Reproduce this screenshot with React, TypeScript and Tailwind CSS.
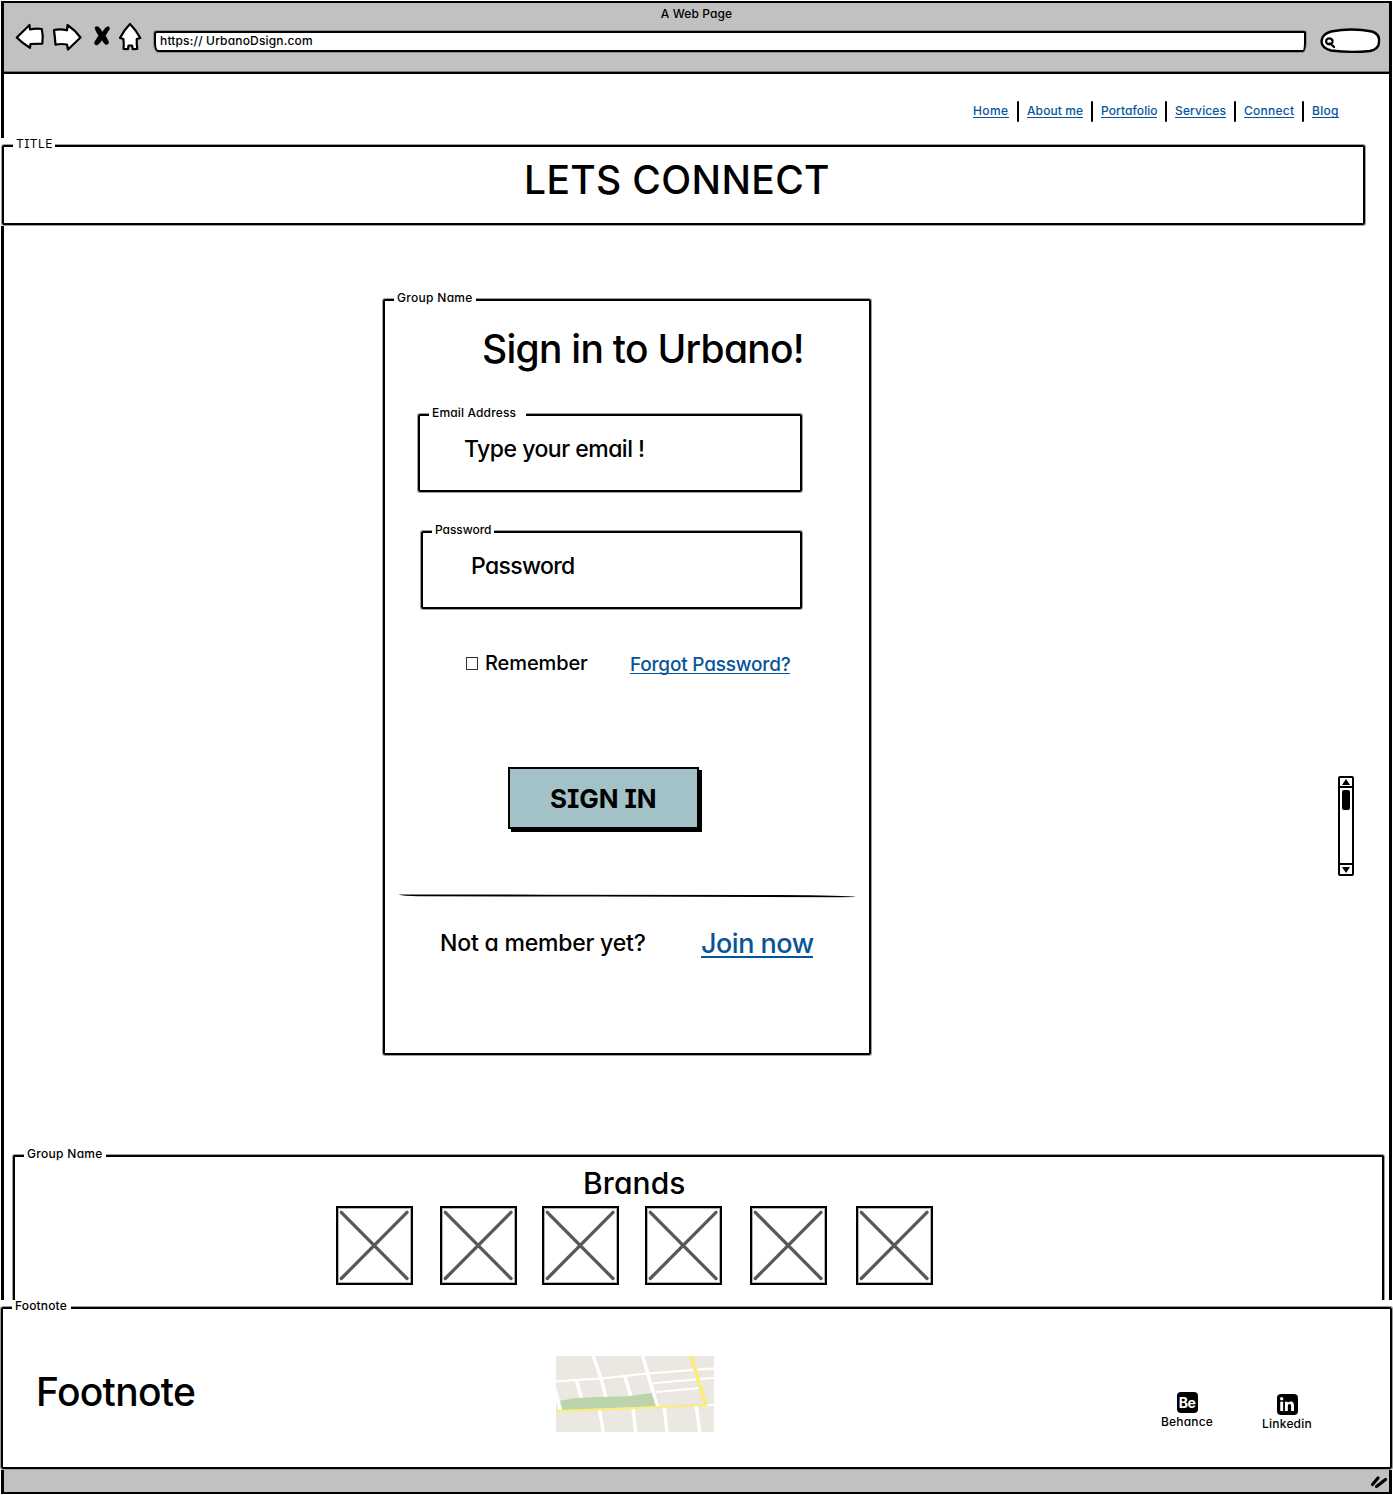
import type { ReactNode } from "react";
import { FaLinkedinIn } from "react-icons/fa6";

const INK = "border-black shadow-[0_0_0_1px_rgba(0,0,0,0.38)]";

function Group({ label, box, legend, children }: { label: string; box: string; legend: string; children: ReactNode }) {
  return (
    <fieldset className={`border-2 ${box}`}>
      <legend className={`ml-[9px] h-4 whitespace-nowrap bg-white pb-1 pl-[3px] text-[12px] font-medium leading-[12px] ${legend}`}>
        {label}
      </legend>
      {children}
    </fieldset>
  );
}

function Toolbar() {
  const outline = { fill: "#fff", stroke: "#000", strokeWidth: 2.2, strokeLinejoin: "round" as const };
  return (
    <div className="flex h-[47px] items-start pl-[10px]">
      <svg className="-mt-[3px] h-[30px] w-[32px]" viewBox="14 22 32 30">
        <path {...outline} d="M16.8 37.5 L29.5 25 L30 29.5 Q36 28 41.8 29 Q43.5 36 42.3 43.6 L30.5 44 L30 47.8 Q22 43 16.8 37.5Z" />
      </svg>
      <svg className="ml-[5px] -mt-[3px] h-[30px] w-[34px]" viewBox="51 22 34 30">
        <path {...outline} d="M54 30 Q60 28.5 67 30.3 L67.5 25 Q75 30 80.5 37.5 L68 49.5 L67 44.5 Q61 43.500 55.5 44.6 Q55 38 54 30Z" />
      </svg>
      <svg className="ml-[7px] -mt-[1px] h-[24px] w-[20px]" viewBox="92 24 20 24">
        <path
          d="M95.300 27 Q98 26 99.500 28 L102.500 32.500 Q105 27.500 107.500 26.800 Q109.800 26.500 109.300 29 L105.300 35.500 L108.500 42 Q108.500 44.500 106 44.500 Q104.300 44 102 39.500 Q99.500 44 97 45 Q94.500 45 94.500 42.500 L98.800 35.500 Q94.500 29 95.300 27Z"
          fill="#000"
          stroke="#000"
          strokeWidth="0.800"
        />
      </svg>
      <svg className="ml-[5px] -mt-[3px] h-[30px] w-[26px]" viewBox="117 22 26 30">
        <path {...outline} d="M130 24 Q136 30 140.3 38 L136.8 39 Q136.5 44 137.3 49 L132.8 49.2 L132 45.5 L128.5 45.5 L128 49.2 L123.6 49 Q124 43 123.4 39 L120 38 Q124 30 130 24Z" />
      </svg>
      <div className="ml-[11px] mt-[6px] h-[21px] w-[1152px] rounded-[3px_2px_3px_4px/3px_2px_10px_9px] border-2 border-black bg-white pl-[4px] text-[12px] font-medium leading-[16px] tracking-[0.16px] shadow-[0_0_0_1px_rgba(0,0,0,0.25)]">
        https:// UrbanoDsign.com
      </div>
      <svg className="ml-[12px] mt-[1px] h-[30px] w-[66px]" viewBox="1318 26 66 30">
        <path d="M1331 31.5 Q1352 27.5 1372 31.5 Q1380 34 1379 42 Q1379 49 1370 51 Q1350 53 1331 50.5 Q1321.5 48 1321.5 41 Q1322 34 1331 31.5Z" fill="#fff" stroke="#000" strokeWidth="2.4" />
        <path d="M1329.300 38.300 a3.300 3 0 1 0 .1 0Z M1329.500 43.500 L1331.300 44.300 M1331.500 44.500 L1334 47" fill="none" stroke="#000" strokeWidth="2.3" strokeLinecap="round" />
      </svg>
    </div>
  );
}

const LINKS = [
  ["Home", "w-[36px] tracking-[0.4px]"],
  ["About me", "w-[56px] tracking-[0.1px]"],
  ["Portafolio", "w-[56px] tracking-[0.08px]"],
  ["Services", "w-[51px] tracking-[0.15px]"],
  ["Connect", "w-[50px] tracking-[0.25px]"],
  ["Blog", "w-[27px] tracking-[0.3px]"],
];

function Nav() {
  return (
    <nav className="flex h-16 items-start justify-end gap-2 pr-[50px] pt-[27px]">
      {LINKS.map(([name, size], i) => (
        <div key={name} className="flex gap-2">
          {i > 0 && <span className="h-[21px] w-[2px] rounded-sm bg-black" />}
          <a className={`mt-[3px] h-[14px] whitespace-nowrap border-b border-[#08549a] text-[12px] font-medium leading-[14px] text-[#08549a] ${size}`}>{name}</a>
        </div>
      ))}
    </nav>
  );
}

function SignIn() {
  return (
    <Group label="Group Name" box={`ml-[379px] mt-[66px] h-[763px] w-[488px] rounded-[2px] ${INK}`} legend="w-[82px] tracking-[0.3px]">
      <h2 className="mt-[21px] h-[39px] pl-[97px] text-[39px] font-[450] leading-[40px] tracking-[-0.74px]">Sign in to Urbano!</h2>
      <Group label="Email Address" box={`ml-[33px] mt-[39px] h-[85px] w-[384px] rounded-[2px] ${INK}`} legend="w-[97px] tracking-[0.15px]">
        <p className="mt-3 pl-[44px] text-[23px] font-[450] leading-7 tracking-[-0.5px]">Type your email !</p>
      </Group>
      <Group label="Password" box={`ml-[36px] mt-8 h-[85px] w-[381px] rounded-[2px] ${INK}`} legend="w-[62px] tracking-[-0.05px]">
        <p className="mt-3 pl-[48px] text-[23px] font-[450] leading-7 tracking-[-0.65px]">Password</p>
      </Group>
      <div className="mt-[41px] flex h-7 items-start pl-[81px]">
        <span className="mt-[7px] h-[13px] w-3 border border-black/80" />
        <span className="ml-[7px] w-[145px] text-[20px] font-[450] leading-[26px] tracking-[-0.1px]">Remember</span>
        <a className="mt-px h-[23px] w-[160px] whitespace-nowrap border-b border-[#08549a] text-[19px] font-[450] leading-[27px] tracking-[-0.2px] text-[#08549a]">Forgot Password?</a>
      </div>
      <button className="ml-[123px] mt-[89px] block h-[62px] w-[191px] border-2 border-black bg-[#a3c2c7] pl-[40px] text-left text-[26px] font-bold leading-[59px] tracking-[-0.1px] shadow-[3px_3px_0_#000]">
        SIGN IN
      </button>
      <svg className="ml-[13px] mt-[65px] h-1 w-[459px]" viewBox="0 0 459 4">
        <path d="M0.500 0.600 Q8 0.200 150 0.700 L380 1 Q450 1.400 458 3 L440 3.200 L200 2.600 L20 2.300 Q5 2 0.500 0.600Z" />
      </svg>
      <div className="mt-[31px] flex items-start pl-[55px]">
        <span className="w-[261px] text-[23px] font-[450] leading-7 tracking-[-0.2px]">Not a member yet?</span>
        <a className="h-[29px] w-[112px] whitespace-nowrap border-b-2 border-[#08549a] text-[27px] font-[450] leading-[29px] tracking-[-0.5px] text-[#08549a]">Join now</a>
      </div>
    </Group>
  );
}

function ScrollBar() {
  return (
    <div className="ml-auto mr-[35px] mt-[550px] flex h-[100px] w-4 flex-col items-center rounded-[2px] border-2 border-black">
      <div className="flex h-[10px] w-full items-center justify-center border-b-2 border-black">
        <svg className="h-[6px] w-2" viewBox="0 0 8 6"><path d="M4 0 L8 6 H0Z" /></svg>
      </div>
      <div className="mt-[2px] h-5 w-2 rounded-[2px] bg-black" />
      <div className="mt-auto flex h-[11px] w-full items-center justify-center border-t-2 border-black">
        <svg className="h-[6px] w-2" viewBox="0 0 8 6"><path d="M4 6 L8 0 H0Z" /></svg>
      </div>
    </div>
  );
}

const BRAND_GAPS = ["ml-[321px]", "ml-[27px]", "ml-[25px]", "ml-[26px]", "ml-[28px]", "ml-[29px]"];

function Brands() {
  return (
    <Group label="Group Name" box={`ml-[9px] h-[152px] w-[1371px] rounded-t-[2px] border-b-0 ${INK}`} legend="w-[82px] tracking-[0.3px]">
      <h2 className="mt-px pl-[568px] text-[30px] font-[450] leading-9 tracking-[0.1px]">Brands</h2>
      <div className="mt-[5px] flex">
        {BRAND_GAPS.map((gap) => (
          <div key={gap} className={`h-[79px] w-[77px] border-2 border-black shadow-[inset_0_0_0_1px_rgba(0,0,0,0.3)] ${gap}`}>
            <svg className="h-full w-full" viewBox="0 0 73 75" stroke="#595959" strokeWidth="3.3" strokeLinecap="round">
              <path d="M3.3 4.3 L69 70.500 M69 4.3 L3.3 70.500" />
            </svg>
          </div>
        ))}
      </div>
    </Group>
  );
}

function StreetMap() {
  return (
    <svg className="mt-10 h-[76px] w-[158px]" viewBox="0 0 474 228" fill="none">
      <path d="M0 0H474V228H0Z" fill="#ebe8e1" />
      <g stroke="#fff">
        <path d="M0 76 L140 67 L270 53 L474 37" strokeWidth="7" />
        <path d="M290 82 L474 65 M300 108 L432 96 M440 148 L474 146" strokeWidth="6" />
        <path d="M112 0 L134 64 L150 124" strokeWidth="10" />
        <path d="M260 0 L304 152" strokeWidth="11" />
        <path d="M62 74 L76 126 M207 62 L224 120 M-3 100 L14 164" strokeWidth="11" />
        <path d="M130 160 L142 228 M231 158 L239 228 M325 156 L333 228 M421 150 L431 228" strokeWidth="10" />
      </g>
      <path d="M12 134 Q60 124 110 124 L215 121 L287 111 L300 151 L19 163Z" fill="#bcd4ac" />
      <path d="M0 165 L300 154 L454 146" stroke="#fcee72" strokeWidth="6" />
      <path d="M405 0 L450 148" stroke="#fcee72" strokeWidth="11" />
    </svg>
  );
}

function Social({ place, label, children }: { place: string; label: string; children: ReactNode }) {
  return (
    <div className={`flex w-[60px] flex-col items-center ${place}`}>
      <div className="flex size-[21px] items-center justify-center rounded-[4px] bg-black text-white">{children}</div>
      <span className="text-[12px] font-medium leading-[17px] tracking-[0.2px]">{label}</span>
    </div>
  );
}

export default function App() {
  return (
    <div className="h-[1495px] w-[1393px] overflow-hidden bg-white pl-px pt-px font-[Inter,'Liberation_Sans',sans-serif] text-black [font-feature-settings:'cv11','cv08']">
      <div className="flex h-[1493px] w-[1391px] flex-col border-x-[3px] border-y-2 border-black">
        <header className="h-[71px] shrink-0 border-b-2 border-black bg-[#c1c1c1] shadow-[inset_0_-1px_0_rgba(0,0,0,0.4)]">
          <div className="h-[22px] text-center text-[12px] font-medium leading-[22px] tracking-[0.1px]">A Web Page</div>
          <Toolbar />
        </header>
        <Nav />
        <div className="-ml-[3px] h-[88px] w-[1366px] shrink-0 bg-white pl-px">
          <Group label="TITLE" box={`h-[87px] w-[1363px] rounded-[2px] ${INK}`} legend="w-[42px] font-normal tracking-[0.4px]">
            <h1 className="mt-[6px] pl-[520px] text-[39px] font-[450] leading-[40px] tracking-[0.35px]">LETS CONNECT</h1>
          </Group>
        </div>
        <main className="flex h-[922px] shrink-0 items-start">
          <SignIn />
          <ScrollBar />
        </main>
        <section className="h-[152px] shrink-0">
          <Brands />
        </section>
        <footer className="relative -mx-[3px] h-[170px] w-[1391px] shrink-0 bg-white">
          <Group label="Footnote" box={`h-[169px] w-[1391px] rounded-[2px] ${INK}`} legend="w-[59px] tracking-[0.15px]">
            <div className="flex items-start pl-[33px]">
              <p className="mt-[52px] w-[520px] text-[39px] font-[450] leading-[48px] tracking-[-0.7px]">Footnote</p>
              <StreetMap />
              <Social place="ml-[443px] mt-[76px]" label="Behance">
                <span className="text-[14px] font-bold leading-none tracking-[-0.6px]">Be</span>
              </Social>
              <Social place="ml-[40px] mt-[78px]" label="Linkedin"><FaLinkedinIn className="size-[16px]" /></Social>
            </div>
          </Group>
        </footer>
        <div className="flex flex-1 items-center justify-end bg-[#c1c1c1] pr-px">
          <svg className="mt-[2px] h-[14px] w-[18px]" viewBox="0 0 18 14" stroke="#000" strokeWidth="3.2" strokeLinecap="round">
            <path d="M2.5 9.5 L8 3 M6.5 11.5 L15.5 4.5" />
          </svg>
        </div>
      </div>
    </div>
  );
}
